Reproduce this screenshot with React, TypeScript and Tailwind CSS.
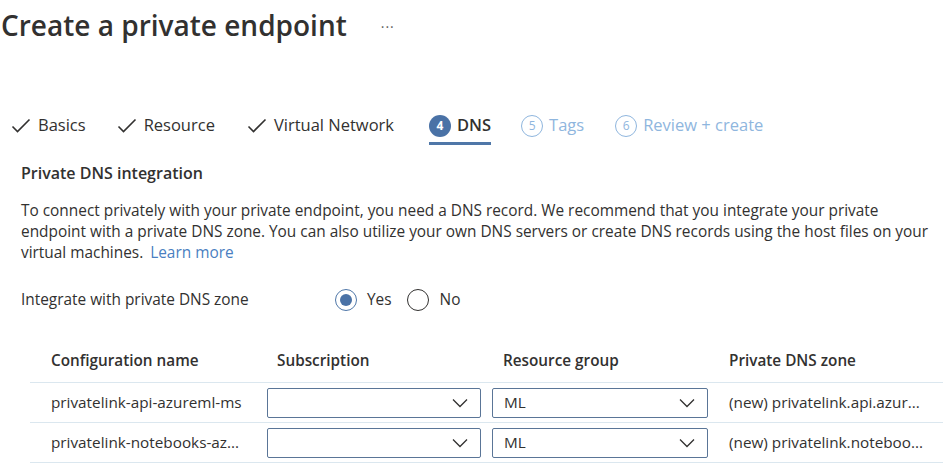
import React from "react";

const font = { fontFamily: '"Open Sans", "Noto Sans", Arial, sans-serif' };

const Check: React.FC = () => (
  <svg width="20" height="16" viewBox="0 0 20 16" className="shrink-0">
    <path d="M1.5 8.5 L6.5 13.5 L18.5 1.5" fill="none" stroke="#323130" strokeWidth="1.6" />
  </svg>
);

const Chevron: React.FC = () => (
  <svg width="16" height="10" viewBox="0 0 16 10">
    <path d="M1 1.5 L8 8.5 L15 1.5" fill="none" stroke="#323130" strokeWidth="1.3" />
  </svg>
);

const Dropdown: React.FC<{ value?: string; width: string }> = ({ value, width }) => (
  <div
    className={`${width} h-[30px] border border-[#5a7597] rounded-[2px] flex items-center justify-between pl-[11px] pr-[12px] text-[15.3px] text-[#323130]`}
  >
    <span>{value}</span>
    <Chevron />
  </div>
);

const rows = [
  { name: "privatelink-api-azureml-ms", zone: "(new) privatelink.api.azur..." },
  { name: "privatelink-notebooks-az...", zone: "(new) privatelink.noteboo..." },
];

const App: React.FC = () => {
  return (
    <div className="w-[947px] h-[470px] overflow-hidden bg-white text-[#323130]" style={font}>
      {/* header */}
      <div className="flex items-center pl-[1px] pt-[4px] h-[46px]">
        <h1 className="text-[28px] font-semibold leading-none">Create a private endpoint</h1>
        <span className="ml-[34px] text-[14px] tracking-[1px] text-[#605e5c] -mt-[6px]">...</span>
      </div>

      {/* tabs */}
      <div className="flex items-end mt-[63px] pl-[11px] h-[36px] text-[16.5px]">
        <div className="flex items-center gap-[7px] h-[36px] mr-[31px] pb-[3px]">
          <Check />
          <span>Basics</span>
        </div>
        <div className="flex items-center gap-[7px] h-[36px] mr-[32px] pb-[3px]">
          <Check />
          <span>Resource</span>
        </div>
        <div className="flex items-center gap-[7px] h-[36px] mr-[35px] pb-[3px]">
          <Check />
          <span>Virtual Network</span>
        </div>
        <div className="flex items-center gap-[6px] h-[36px] mr-[30px] border-b-[3px] border-[#4f77a8]">
          <span className="w-[22px] h-[22px] rounded-full bg-[#4a72a6] text-white text-[12px] font-bold flex items-center justify-center">
            4
          </span>
          <span className="font-semibold">DNS</span>
        </div>
        <div className="flex items-center gap-[6px] h-[36px] mr-[31px] text-[#8fb6de] pb-[3px]">
          <span className="w-[22px] h-[22px] rounded-full border border-[#8fb6de] text-[12px] flex items-center justify-center">
            5
          </span>
          <span>Tags</span>
        </div>
        <div className="flex items-center gap-[6px] h-[36px] text-[#8fb6de] pb-[3px]">
          <span className="w-[22px] h-[22px] rounded-full border border-[#8fb6de] text-[12px] flex items-center justify-center">
            6
          </span>
          <span>Review + create</span>
        </div>
      </div>

      {/* body */}
      <div className="pl-[21px] pr-[12px] mt-[17px]">
        <h2 className="text-[16px] font-semibold leading-[22px]">Private DNS integration</h2>
        <p className="mt-[16px] text-[15.4px] leading-[21px] whitespace-nowrap">
          To connect privately with your private endpoint, you need a DNS record. We recommend that you integrate your
          private
          <br />
          endpoint with a private DNS zone. You can also utilize your own DNS servers or create DNS records using the
          host files on your
          <br />
          virtual machines. <a className="text-[#4a7fc1] ml-[3px]">Learn more</a>
        </p>

        <div className="flex items-center mt-[24px] h-[26px] text-[15.4px]">
          <span className="w-[314px]">Integrate with private DNS zone</span>
          <label className="flex items-center gap-[10px]">
            <span className="w-[22px] h-[22px] rounded-full border border-[#4f77a8] flex items-center justify-center">
              <span className="w-[12px] h-[12px] rounded-full bg-[#4a72a6]" />
            </span>
            <span>Yes</span>
          </label>
          <label className="flex items-center gap-[11px] ml-[15px]">
            <span className="w-[22px] h-[22px] rounded-full border border-[#323130]" />
            <span>No</span>
          </label>
        </div>
      </div>

      {/* table */}
      <div className="ml-[30px] mt-[30px] w-[913px] text-[15.3px]">
        <div className="grid grid-cols-[237px_225px_227px_1fr] h-[40px] pb-[5px] items-center font-semibold border-b border-[#dbe7ef]">
          <span className="pl-[21px]">Configuration name</span>
          <span className="pl-[10px]">Subscription</span>
          <span className="pl-[11px]">Resource group</span>
          <span className="pl-[10px]">Private DNS zone</span>
        </div>
        {rows.map((r) => (
          <div
            key={r.name}
            className="grid grid-cols-[237px_225px_227px_1fr] h-[40px] items-center border-b border-[#dbe7ef]"
          >
            <span className="pl-[21px] whitespace-nowrap">{r.name}</span>
            <Dropdown width="w-[214px]" />
            <Dropdown width="w-[216px]" value="ML" />
            <span className="pl-[10px] whitespace-nowrap">{r.zone}</span>
          </div>
        ))}
      </div>
    </div>
  );
};

export default App;
